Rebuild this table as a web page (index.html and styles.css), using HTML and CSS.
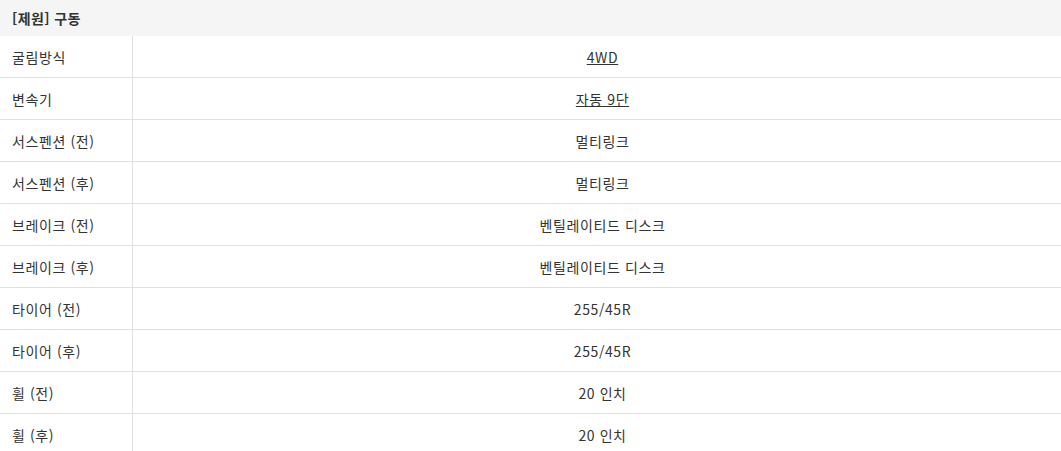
FILE: index.html
```html
<!DOCTYPE html>
<html lang="ko">
<head>
    <meta charset="UTF-8">
    <title>[제원] 구동</title>
    <link rel="stylesheet" href="styles.css">
</head>
<body>
    <table class="spec">
        <thead>
            <tr><th colspan="2">[제원] 구동</th></tr>
        </thead>
        <tbody>
            <tr><td class="label">굴림방식</td><td class="value"><a href="#">4WD</a></td></tr>
            <tr><td class="label">변속기</td><td class="value"><a href="#">자동 9단</a></td></tr>
            <tr><td class="label">서스펜션 (전)</td><td class="value">멀티링크</td></tr>
            <tr><td class="label">서스펜션 (후)</td><td class="value">멀티링크</td></tr>
            <tr><td class="label">브레이크 (전)</td><td class="value">벤틸레이티드 디스크</td></tr>
            <tr><td class="label">브레이크 (후)</td><td class="value">벤틸레이티드 디스크</td></tr>
            <tr><td class="label">타이어 (전)</td><td class="value">255/45R</td></tr>
            <tr><td class="label">타이어 (후)</td><td class="value">255/45R</td></tr>
            <tr><td class="label">휠 (전)</td><td class="value">20 인치</td></tr>
            <tr><td class="label">휠 (후)</td><td class="value">20 인치</td></tr>
        </tbody>
    </table>
</body>
</html>
```

FILE: styles.css
```css
body {
    margin: 0;
    font-family: "Noto Sans CJK KR", "Noto Sans", sans-serif;
    font-size: 14px;
    letter-spacing: 0.6px;
    color: #333;
    background: #fff;
}
.spec {
    width: 100%;
    border-collapse: collapse;
}
.spec th {
    height: 36px;
    padding: 0 12px;
    text-align: left;
    font-weight: bold;
    letter-spacing: 0.4px;
    background-color: #f5f5f5;
}
.spec td {
    height: 41px;
    padding: 0;
    border-bottom: 1px solid #e0e0e0;
}
.spec .label {
    width: 120px;
    padding-left: 12px;
    border-right: 1px solid #e0e0e0;
}
.spec .value {
    padding-left: 11px;
    text-align: center;
}
.spec a {
    color: #333;
    text-decoration: underline;
}
```
